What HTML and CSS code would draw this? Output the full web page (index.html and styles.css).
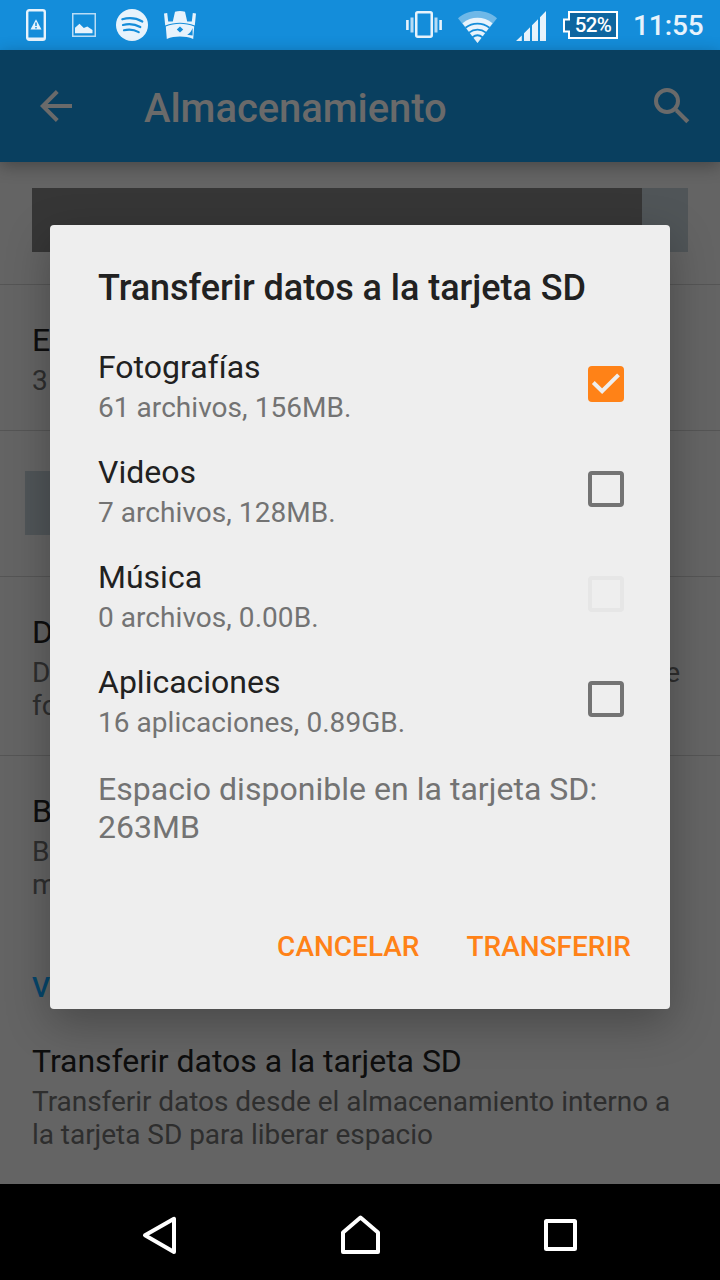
FILE: index.html
```html
<!DOCTYPE html>
<html lang="es">
<head>
<meta charset="utf-8">
<title>Almacenamiento</title>
<link rel="stylesheet" href="styles.css">
</head>
<body>
<div class="screen">
  <header class="status">
    <svg class="ic-phone" width="20" height="32" viewBox="0 0 20 32"><rect x="1.2" y="1.2" width="17.6" height="29.6" rx="2" fill="none" stroke="#e7f3fc" stroke-width="2.4"/><path d="M2 29.5h16" stroke="#e7f3fc" stroke-width="2"/><path d="M10 10.300l5.500 10.200h-11z" fill="#e7f3fc"/><path d="M10 13.500v3.500M10 18v1.500" stroke="#148dda" stroke-width="1.500"/></svg>
    <svg class="ic-image" width="24" height="24" viewBox="0 0 24 24"><rect x=".75" y=".75" width="22.500" height="22.500" fill="none" stroke="#b9dcf5" stroke-width="1.500"/><path d="M3 20.300v-5.500l4.500-4 4.300 4.200 3.500-1.500 5.200 3.500v3.300z" fill="#e7f3fc"/></svg>
    <svg class="ic-music" width="32" height="32" viewBox="0 0 32 32"><circle cx="16" cy="16" r="16" fill="#e7f3fc"/><path d="M6.300 10.300c6.500-1.800 14-1.200 20 2.200M7 16c5.600-1.500 12-.9 17.300 2M8 21.200c5-1.200 10.300-.6 14.700 1.900" fill="none" stroke="#148dda" stroke-width="2.200" stroke-linecap="round"/></svg>
    <svg class="ic-crown" width="32" height="28" viewBox="0 0 32 28"><path d="M0 2.500L3.200 2l1 8.500h4.600L11 .8Q16-.8 21 .8l2.200 9.700h4.600L28.800 2l3.200.5-1.200 12C21 10.800 11 10.800 1.200 14.500z" fill="#e7f3fc"/><path d="M1.800 15.600c9-3.700 19.400-3.700 28.400 0L29.200 28c-8-3.200-18.400-3.200-26.400 0z" fill="#e7f3fc"/><path d="M16 15.500l3.200 3-3.200 3-3.200-3z" fill="#148dda"/><path d="M28.600 17v7.500l-5.400-.8c2.600-1.400 4.400-3.700 5.400-6.700z" fill="#148dda"/></svg>
    <svg class="ic-vibrate" width="36" height="28" viewBox="0 0 36 28"><rect x="10.250" y="1.250" width="15.500" height="24.500" rx="1.500" fill="none" stroke="#e7f3fc" stroke-width="2.500"/><path d="M1.400 9v10M34.600 9v10" stroke="#e7f3fc" stroke-width="2.600"/><path d="M6 6.500v15M30 6.500v15" stroke="#b5dbf5" stroke-width="3"/></svg>
    <svg class="ic-wifi" width="39" height="32" viewBox="0 0 39 32"><path d="M0 7.200C11-2.400 28-2.400 39 7.200L19.500 32z" fill="#6eb8e8"/><path d="M4.500 12.200c8.800-7.200 21.200-7.200 30 0L19.500 32z" fill="#e7f3fc"/><path d="M7.500 16.800c7-5.600 17-5.600 24 0M11 21.600c5-3.900 12-3.900 17 0M14.500 26.200c3-2.400 7-2.400 10 0" fill="none" stroke="#148dda" stroke-width="1.800"/></svg>
    <svg class="ic-signal" width="30" height="30" viewBox="0 0 30 30"><path d="M0 30l5.800-5.500V30zM8 22.300l6-6V30H8zM16 14.300l6-6V30h-6zM24 6.200L30 0v30h-6z" fill="#e7f3fc"/></svg>
    <span class="battery"><svg width="55" height="28" viewBox="0 0 55 28"><path d="M6 1h48v26H6v-6.500H1v-12h5z" fill="#0e66a0" stroke="#fff" stroke-width="2"/></svg><b>52%</b></span>
    <span class="clock">11:55</span>
  </header>
  <div class="appbar">
    <svg width="32" height="32" viewBox="0 0 32 32"><path d="M17.300 1.500L2.800 16l14.500 14.500M2 16h30" fill="none" stroke="#6a6a6a" stroke-width="4"/></svg>
    <h1>Almacenamiento</h1>
    <svg width="36" height="36" viewBox="0 0 36 36"><circle cx="13" cy="13" r="11" fill="none" stroke="#6a6a6a" stroke-width="4"/><path d="M20.500 20.500h3L35.300 32.300l-3 3L21.500 24.300z" fill="#6a6a6a"/></svg>
  </div>
  <main class="list">
    <div class="usage"><div class="bar"><i></i></div></div>
    <section class="row"><h2>E</h2><p>3</p></section>
    <div class="legend"><i></i></div>
    <section class="row"><h2>D</h2><p class="split"><span>D</span><span>e</span></p><p>fo</p></section>
    <section class="row last"><h2>B</h2><p>B</p><p>m</p></section>
    <h3>V</h3>
    <section class="row transfer"><h2>Transferir datos a la tarjeta SD</h2><p>Transferir datos desde el almacenamiento interno a</p><p>la tarjeta SD para liberar espacio</p></section>
  </main>
  <nav class="nav">
    <svg width="40" height="40" viewBox="0 0 40 40"><path d="M35 3.800v33.200L6 20.300z" fill="none" stroke="#fff" stroke-width="4" stroke-linejoin="round"/></svg>
    <svg width="40" height="40" viewBox="0 0 40 40"><path d="M3 37V17.500L20.500 2.500 38 17.500V37z" fill="none" stroke="#fff" stroke-width="4" stroke-linejoin="round"/></svg>
    <svg width="40" height="40" viewBox="0 0 40 40"><rect x="5" y="6" width="29" height="28" rx=".5" fill="none" stroke="#fff" stroke-width="4" stroke-linejoin="round"/></svg>
  </nav>
  <div class="dialog" role="dialog">
    <h2 class="title">Transferir datos a la tarjeta SD</h2>
    <div class="options">
      <div class="option"><div><h4>Fotografías</h4><p>61 archivos, 156MB.</p></div><span class="check on"><svg width="36" height="36" viewBox="0 0 36 36"><path d="M5.300 16.500l8.800 8.700L30.500 8.800" fill="none" stroke="#eee" stroke-width="4"/></svg></span></div>
      <div class="option"><div><h4>Videos</h4><p>7 archivos, 128MB.</p></div><span class="check"></span></div>
      <div class="option"><div><h4>Música</h4><p>0 archivos, 0.00B.</p></div><span class="check disabled"></span></div>
      <div class="option"><div><h4>Aplicaciones</h4><p>16 aplicaciones, 0.89GB.</p></div><span class="check"></span></div>
    </div>
    <p class="space">Espacio disponible en la tarjeta SD:<br>263MB</p>
    <div class="actions"><span>CANCELAR</span><span>TRANSFERIR</span></div>
  </div>
</div>
</body>
</html>
```
FILE: styles.css
```css
* { box-sizing: border-box; margin: 0; padding: 0; }
body { font-family: Roboto, "Noto Sans", sans-serif; background: #646464; }
svg { display: block; flex: none; }
h1, h2, h3, h4, p, span { white-space: nowrap; }
.screen { position: relative; width: 720px; height: 1280px; overflow: hidden; display: flex; flex-direction: column; }

.status { height: 50px; flex: none; background: #148dda; display: flex; align-items: flex-start; padding: 9px 16px 0 26px; }
.ic-image { margin: 4px 0 0 26px; }
.ic-music { margin-left: 20px; }
.ic-crown { margin: 2px 0 0 16px; }
.ic-vibrate { margin: 2px 0 0 auto; }
.ic-wifi { margin: 2px 0 0 16px; }
.ic-signal { margin: 2px 0 0 19px; }
.battery { position: relative; margin: 2px 0 0 17px; }
.battery b { position: absolute; left: 5px; right: 0; top: 0; text-align: center; font-weight: 500; font-size: 20.5px; line-height: 28px; letter-spacing: -0.7px; color: #fff; }
.clock { width: 71px; margin-left: 15px; font-size: 28px; line-height: 33px; font-weight: 500; letter-spacing: -0.1px; color: #e7f3fc; }

.appbar { position: relative; height: 112px; flex: none; background: #093f5f; display: flex; align-items: center; padding: 0 30px 0 40px; box-shadow: 0 4px 16px rgba(0,0,0,.3); }
.appbar h1 { margin: 5px auto 0 72px; font-size: 40px; line-height: 47px; font-weight: 500; letter-spacing: -0.06px; color: #6a6a6a; }

.list { flex: 1; background: #646464; }
.usage { height: 123px; padding: 26px 32px 0; border-bottom: 1px solid #555; }
.bar { height: 64px; background: #505558; }
.bar i { display: block; width: 610px; height: 64px; background: #363636; }
.row { padding: 36px 32px 33px; border-bottom: 1px solid #555; }
.row h2 { font-size: 32px; line-height: 38px; font-weight: 400; letter-spacing: -0.03px; color: #0e0e0e; margin-bottom: 5px; }
.row p { font-size: 28px; line-height: 33px; letter-spacing: -0.04px; color: #2e2e2e; }
.split { display: flex; justify-content: space-between; padding-right: 8px; }
.legend { height: 146px; padding: 40px 25px 0; border-bottom: 1px solid #555; }
.legend i { display: block; width: 64px; height: 64px; background: #505558; }
.last, .transfer { border-bottom: 0; }
.list h3 { margin: 37px 32px 0; height: 35px; font-size: 28px; line-height: 33px; font-weight: 500; color: #06456a; }

.nav { height: 96px; flex: none; background: #000; display: flex; justify-content: space-between; padding: 31px 139px 0; }

.dialog { position: absolute; left: 50px; top: 225px; width: 620px; height: 784px; padding: 42px 39px 0 48px; background: #eee; border-radius: 4px; box-shadow: 0 14px 44px rgba(0,0,0,.28); display: flex; flex-direction: column; }
.title { font-size: 36px; line-height: 42px; font-weight: 500; letter-spacing: -0.03px; color: #212121; }
.options { margin-top: 39px; display: flex; flex-direction: column; gap: 29px; }
.option { display: flex; justify-content: space-between; padding-right: 7px; height: 76px; }
.option h4 { font-size: 32px; line-height: 38px; font-weight: 400; color: #212121; margin-bottom: 5px; }
.option p { font-size: 28px; line-height: 33px; letter-spacing: 0.05px; color: #737373; }
.check { width: 36px; height: 36px; margin-top: 18px; border: 4px solid #737373; border-radius: 4px; }
.check.on { border: 0; background: #ff8217; }
.check.disabled { border-color: #e6e6e6; }
.space { margin-top: 31px; font-size: 32px; line-height: 38px; letter-spacing: 0.03px; color: #737373; }
.actions { margin-top: 84px; display: flex; justify-content: flex-end; gap: 47px; font-size: 28px; line-height: 33px; font-weight: 500; color: #ff8217; }
```
